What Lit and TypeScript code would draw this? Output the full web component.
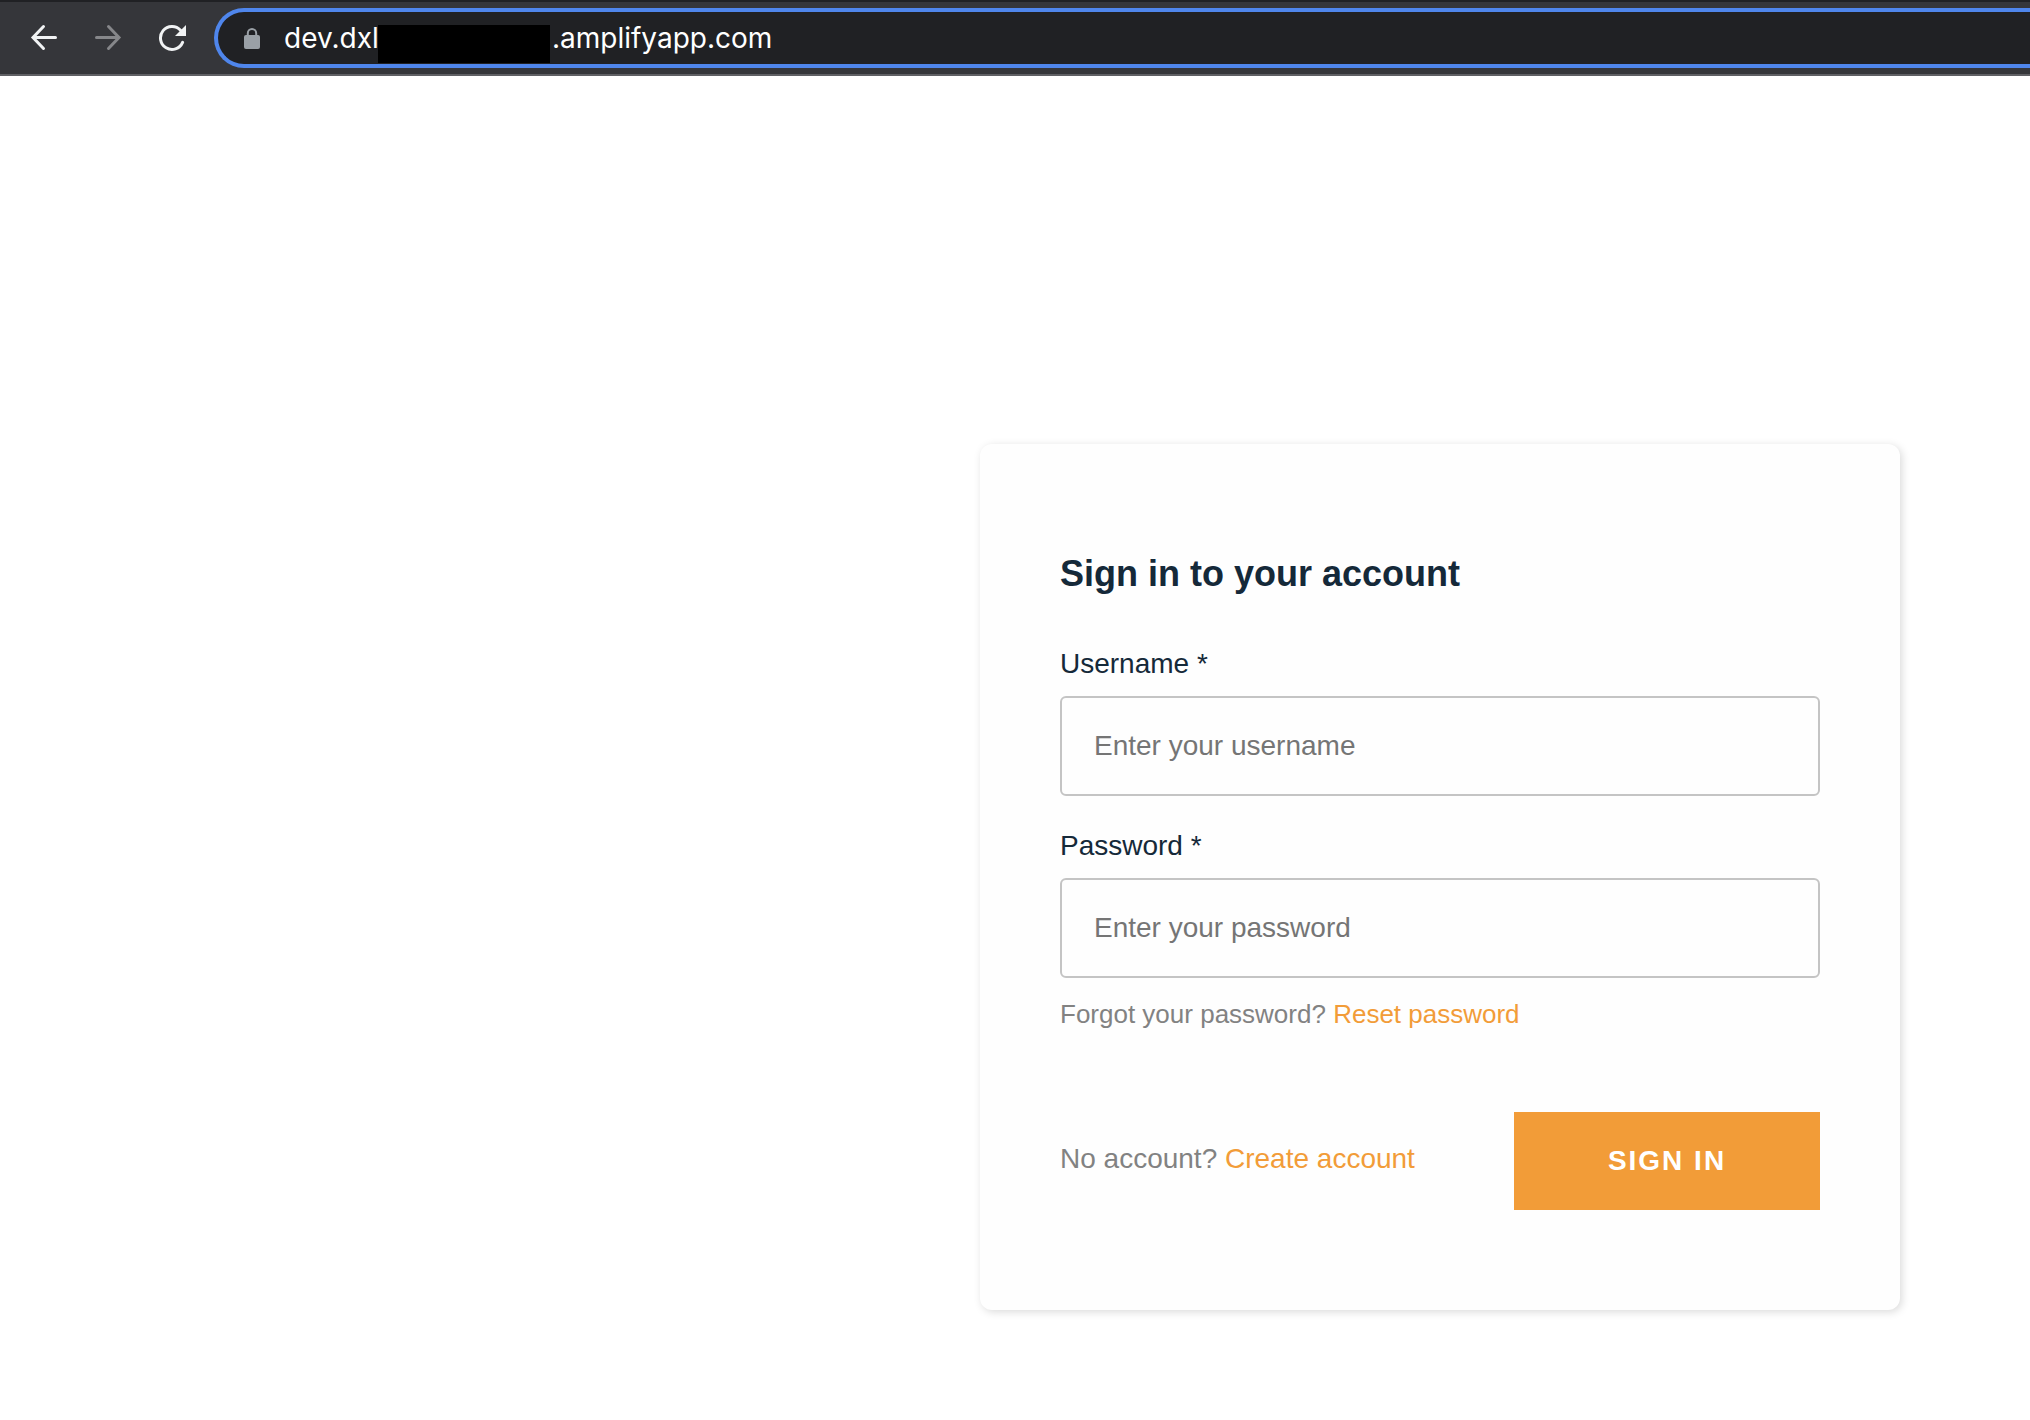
import { LitElement, html, css } from "lit";
import { customElement } from "lit/decorators.js";

const HIDDEN_GAP = "\u00a0".repeat(22);

@customElement("browser-toolbar")
export class BrowserToolbar extends LitElement {
  static styles = css`
    :host {
      display: block;
    }
    .bar {
      display: flex;
      align-items: center;
      box-sizing: border-box;
      height: 76px;
      padding: 0 0 0 12px;
      background: #35363a;
      border-top: 2px solid #202124;
      border-bottom: 2px solid #5f6064;
      overflow: hidden;
    }
    .nav {
      display: flex;
    }
    .nav-button {
      display: grid;
      place-items: center;
      width: 64px;
      height: 60px;
      padding: 0;
      border: 0;
      background: none;
      color: #f1f3f4;
    }
    .nav-button:disabled {
      color: #86878a;
    }
    .address {
      display: flex;
      flex: 1;
      align-items: center;
      box-sizing: border-box;
      height: 60px;
      margin-left: 10px;
      padding-left: 26px;
      border: 4px solid #4f86ec;
      border-right: 0;
      border-radius: 30px 0 0 30px;
      background: #202124;
    }
    .url-wrap {
      position: relative;
      flex: 1;
      margin-left: 24px;
    }
    .url {
      display: block;
      box-sizing: border-box;
      width: 100%;
      height: 40px;
      padding: 0;
      border: 0;
      outline: 0;
      background: none;
      color: #ffffff;
      font: 400 28px/40px Inter, "Liberation Sans", sans-serif;
    }
    .redaction {
      position: absolute;
      left: 94px;
      top: 7px;
      width: 172px;
      height: 38px;
      background: #000000;
    }
  `;

  render() {
    return html`
      <header class="bar">
        <nav class="nav" aria-label="History">
          <button class="nav-button" type="button" aria-label="Back">
            <svg width="28" height="28" viewBox="0 0 28 28" fill="none" stroke="currentColor" stroke-width="3" stroke-linecap="round">
              <path d="M25.500 13.500H3.500M13.500 2.500L3 13.500L13.500 24.500" />
            </svg>
          </button>
          <button class="nav-button" type="button" aria-label="Forward" disabled>
            <svg width="28" height="28" viewBox="0 0 28 28" fill="none" stroke="currentColor" stroke-width="3" stroke-linecap="round">
              <path d="M2.500 13.500H24.500M14.500 2.500L25 13.500L14.500 24.500" />
            </svg>
          </button>
          <button class="nav-button" type="button" aria-label="Reload">
            <svg width="28" height="28" viewBox="0 0 28 28" fill="none">
              <path d="M24.600 18.400A11.500 11.500 0 1 1 22.500 6.200" stroke="currentColor" stroke-width="3" stroke-linecap="round" />
              <path d="M28 1V12H17Z" fill="currentColor" />
            </svg>
          </button>
        </nav>
        <div class="address">
          <svg width="16" height="22" viewBox="0 0 16 22" aria-hidden="true">
            <path d="M3.800 9V6.200A4.200 4.200 0 0 1 12.200 6.200V9" fill="none" stroke="#9aa0a6" stroke-width="2" />
            <rect x="0" y="8" width="16" height="14" rx="2" fill="#9aa0a6" />
          </svg>
          <div class="url-wrap">
            <input class="url" type="text" aria-label="Address" spellcheck="false" .value=${"dev.dxl" + HIDDEN_GAP + ".amplifyapp.com"} />
            <span class="redaction"></span>
          </div>
        </div>
      </header>
    `;
  }
}

@customElement("sign-in-card")
export class SignInCard extends LitElement {
  static styles = css`
    :host {
      display: block;
      width: 100%;
      max-width: 920px;
    }
    .card {
      box-sizing: border-box;
      padding: 100px 80px;
      border-radius: 12px;
      background: #fefefe;
      box-shadow: 2px 2px 8px 0 rgba(0, 0, 0, 0.15);
      color: #152939;
      font-family: "Liberation Sans", Arial, sans-serif;
    }
    .title {
      margin: 0 0 40px;
      font-size: 36px;
      line-height: 60px;
      font-weight: 700;
    }
    .field {
      margin-bottom: 30px;
    }
    .label {
      display: block;
      margin-bottom: 12px;
      font-size: 28px;
      line-height: 40px;
    }
    .input {
      display: block;
      box-sizing: border-box;
      width: 100%;
      height: 100px;
      padding: 0 32px;
      border: 2px solid #c4c4c4;
      border-radius: 6px;
      background: #fefefe;
      color: #152939;
      font: 400 28px/40px "Liberation Sans", Arial, sans-serif;
    }
    .input::placeholder {
      color: #757575;
      opacity: 1;
    }
    .hint {
      margin-top: 16px;
      color: #828282;
      font-size: 26px;
      line-height: 40px;
    }
    .link {
      color: #f29c38;
      text-decoration: none;
    }
    .actions {
      display: flex;
      align-items: center;
      justify-content: space-between;
      margin-top: 78px;
    }
    .alternative {
      padding-bottom: 4px;
      color: #828282;
      font-size: 28px;
      line-height: 40px;
    }
    .submit {
      min-width: 306px;
      height: 98px;
      padding: 0 32px;
      border: 0;
      background: #f29c38;
      color: #ffffff;
      font: 700 28px/40px "Liberation Sans", Arial, sans-serif;
      letter-spacing: 2px;
      text-transform: uppercase;
    }
  `;

  private onSubmit(event: Event) {
    event.preventDefault();
  }

  render() {
    return html`
      <form class="card" @submit=${this.onSubmit}>
        <h1 class="title">Sign in to your account</h1>
        <div class="field">
          <label class="label" for="username">Username *</label>
          <input class="input" id="username" type="text" placeholder="Enter your username" autocomplete="username" />
        </div>
        <div class="field">
          <label class="label" for="password">Password *</label>
          <input class="input" id="password" type="password" placeholder="Enter your password" autocomplete="current-password" />
          <div class="hint">Forgot your password? <a class="link" href="#reset">Reset password</a></div>
        </div>
        <div class="actions">
          <span class="alternative">No account? <a class="link" href="#create">Create account</a></span>
          <button class="submit" type="submit">Sign in</button>
        </div>
      </form>
    `;
  }
}

@customElement("app-root")
export class AppRoot extends LitElement {
  static styles = css`
    :host {
      display: block;
      min-height: 100vh;
      background: #ffffff;
    }
    .page {
      display: flex;
      justify-content: flex-end;
      padding: 368px 130px 110px;
    }
  `;

  render() {
    return html`
      <browser-toolbar></browser-toolbar>
      <main class="page"><sign-in-card></sign-in-card></main>
    `;
  }
}
